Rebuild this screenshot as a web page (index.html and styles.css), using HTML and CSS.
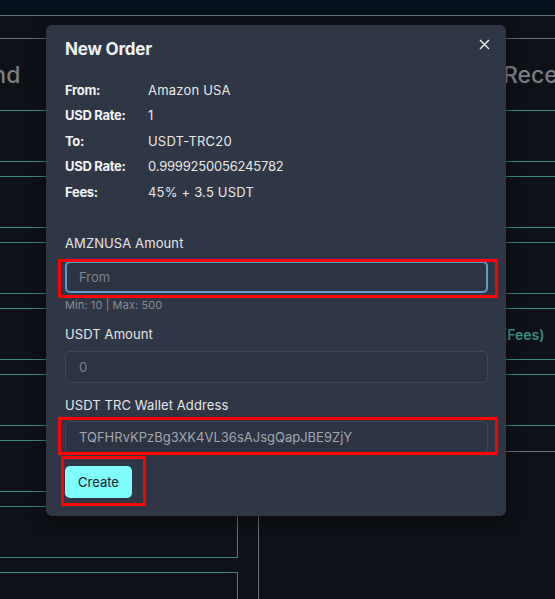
FILE: index.html
```html
<!DOCTYPE html>
<html lang="en">
<head>
<meta charset="utf-8">
<title>New Order</title>
<link rel="stylesheet" href="styles.css">
</head>
<body>
<div class="topbar"></div>
<div class="main">
  <section class="col col-left">
    <h2 class="col-title left-title">Send</h2>
    <div class="boxes">
      <div class="box"></div><div class="box"></div><div class="box"></div><div class="box"></div>
      <div class="box"></div><div class="box"></div><div class="box"></div><div class="box"></div>
    </div>
  </section>
  <section class="col col-right">
    <h2 class="col-title right-title">Receive</h2>
    <div class="boxes">
      <div class="box"></div><div class="box"></div><div class="box"></div>
      <div class="box box-label"><span>(Fees)</span></div>
      <div class="box"></div>
    </div>
    <div class="divider"></div>
  </section>
</div>

<div class="modal">
  <div class="modal-head">
    <h3 class="modal-title">New Order</h3>
    <button class="close" aria-label="Close">
      <svg width="11" height="11" viewBox="0 0 11 11"><path d="M1 1L10 10M10 1L1 10" stroke="#f2f2f2" stroke-width="1.4" fill="none"/></svg>
    </button>
  </div>
  <dl class="info">
    <div class="row"><dt>From:</dt><dd>Amazon USA</dd></div>
    <div class="row"><dt>USD Rate:</dt><dd>1</dd></div>
    <div class="row"><dt>To:</dt><dd>USDT-TRC20</dd></div>
    <div class="row"><dt>USD Rate:</dt><dd class="num">0.9999250056245782</dd></div>
    <div class="row"><dt>Fees:</dt><dd>45% + 3.5 USDT</dd></div>
  </dl>
  <div class="field f1">
    <label class="label">AMZNUSA Amount</label>
    <div class="input focus placeholder">From</div>
    <div class="help">Min: 10 | Max: 500</div>
  </div>
  <div class="field f2">
    <label class="label">USDT Amount</label>
    <div class="input placeholder">0</div>
  </div>
  <div class="field f3">
    <label class="label">USDT TRC Wallet Address</label>
    <div class="input value">TQFHRvKPzBg3XK4VL36sAJsgQapJBE9ZjY</div>
  </div>
  <button class="create">Create</button>
  <div class="mark mark-1"></div>
  <div class="mark mark-2"></div>
  <div class="mark mark-3"></div>
</div>
</body>
</html>
```
FILE: styles.css
```css
* { box-sizing: border-box; }
html, body { margin: 0; padding: 0; }
body {
  background: #0e1117;
  font-family: Inter, "Open Sans", sans-serif;
  width: 555px;
  height: 599px;
  overflow: hidden;
  position: relative;
}
.topbar {
  height: 16px;
  background: #04131f;
  border-bottom: 1px solid #6a6d72;
}
.main {
  margin-top: 22px;
  margin-left: -30px;
  border-top: 1px solid #6a6d72;
  display: grid;
  grid-template-columns: 268px 1fr;
  column-gap: 20px;
  width: 700px;
}
.col-title {
  margin: 0;
  height: 71px;
  display: flex;
  align-items: center;
  font-weight: 500;
  font-size: 23px;
  color: #7b7e82;
}
.left-title { text-indent: -6px; }
.right-title { padding-left: 244px; }
.boxes { display: flex; flex-direction: column; gap: 14px; }
.box {
  height: 52px;
  border: 1px solid #3c857e;
}
.col-left .box { border-left: none; }
.col-right {
  border-left: 1px solid #6a6d72;
  min-height: 600px;
}
.col-right .box { border-right: none; border-left: none; }
.box-label {
  display: flex;
  align-items: center;
  padding-left: 243px;
  font-size: 14px;
  font-weight: 600;
  color: #3e8e88;
}
.divider {
  margin-top: 25px;
  border-top: 1px solid #6a6d72;
}

.modal {
  position: absolute;
  left: 46px;
  top: 25px;
  width: 460px;
  height: 491px;
  background: #2f3646;
  border-radius: 6px;
  box-shadow: 0 4px 14px rgba(0,0,0,0.5);
  padding: 12px 19px 18px;
  color: #ececec;
}
.modal-head {
  display: flex;
  justify-content: space-between;
  align-items: center;
  height: 24px;
}
.modal-title {
  margin: 0;
  font-size: 17px;
  font-weight: 700;
  color: #f2f2f2;
  letter-spacing: -0.2px;
}
.close {
  background: none;
  border: none;
  padding: 0;
  margin: -10px -3px 0 0;
  width: 11px;
  height: 11px;
  display: flex;
}
.info { margin: 16px 0 0; }
.row {
  display: flex;
  height: 25.5px;
  align-items: center;
  font-size: 13px;
}
.row dt {
  width: 83px;
  font-weight: 700;
  color: #f3f3f3;
  letter-spacing: -0.3px;
}
.row dd { margin: 0; color: #e8e8e8; letter-spacing: 0.2px; }
.row dd.num { letter-spacing: -0.2px; }

.field { display: flex; flex-direction: column; }
.f1 { margin-top: 28px; }
.f2 { margin-top: 11px; }
.f3 { margin-top: 12px; }
.label {
  font-size: 13px;
  line-height: 20px;
  color: #e6e6e6;
  margin-bottom: 7px;
  letter-spacing: 0.1px;
}
.f1 .label { margin-bottom: 8px; }
.f3 .label { margin-bottom: 6px; }
.input {
  height: 32px;
  border: 1px solid #3e4657;
  background: #2c3343;
  border-radius: 5px;
  font-size: 13px;
  display: flex;
  align-items: center;
  padding-left: 13px;
  width: 423px;
}
.input.focus {
  border: 2px solid #5b9bd2;
  padding-left: 12px;
}
.placeholder { color: #7e8591; }
.value { color: #a3a8b0; }
.help {
  margin-top: 4px;
  font-size: 11px;
  line-height: 16px;
  color: #868b94;
  letter-spacing: 0.1px;
}
.create {
  margin-top: 13px;
  height: 32px;
  width: 67px;
  border: none;
  border-radius: 5px;
  background: #80fdfd;
  color: #1a2030;
  font-family: inherit;
  font-size: 13px;
  padding: 0;
}
.mark {
  position: absolute;
  border: 3px solid #ff0000;
}
.mark-1 { left: 12px; top: 234px; width: 440px; height: 39px; }
.mark-2 { left: 12px; top: 392px; width: 440px; height: 38px; }
.mark-3 { left: 15px; top: 431px; width: 85px; height: 50px; }
```
